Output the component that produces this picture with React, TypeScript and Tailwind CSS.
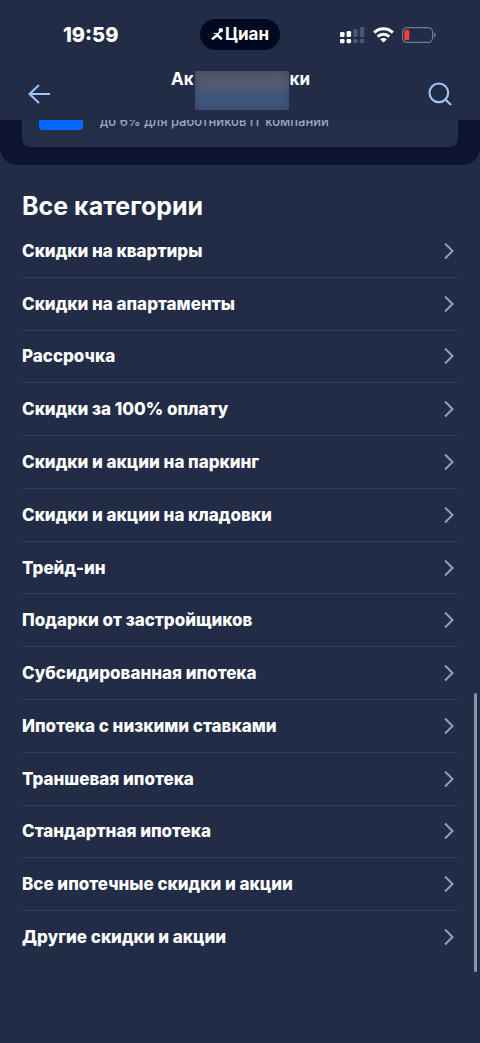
import { Search } from "lucide-react";

const categories = [
  "Скидки на квартиры",
  "Скидки на апартаменты",
  "Рассрочка",
  "Скидки за 100% оплату",
  "Скидки и акции на паркинг",
  "Скидки и акции на кладовки",
  "Трейд-ин",
  "Подарки от застройщиков",
  "Субсидированная ипотека",
  "Ипотека с низкими ставками",
  "Траншевая ипотека",
  "Стандартная ипотека",
  "Все ипотечные скидки и акции",
  "Другие скидки и акции",
];

function CianMark() {
  return (
    <svg viewBox="0 0 13 13" className="size-[13px]" fill="none" stroke="currentColor">
      <circle cx="9.8" cy="2.3" r="2.2" fill="currentColor" stroke="none" />
      <path d="M1 11.4 6.2 7l4.7 4.2" strokeWidth="2.5" />
      <path d="M6.2 6.8 8.8 3.8" strokeWidth="1.5" />
      <path d="M2.6 5.4h3.6" strokeWidth="0.9" />
    </svg>
  );
}

function SignalIcon() {
  return (
    <svg viewBox="0 0 25 17" className="h-[17px] w-[25px]" fill="#fff">
      <rect x="0" y="5" width="4.5" height="5" rx="1.3" />
      <rect x="6.6" y="4" width="4.5" height="6" rx="1.3" />
      <rect x="13.2" y="2" width="4.5" height="8" rx="1.3" fill="#4d566d" />
      <rect x="19.8" y="0" width="4.5" height="10" rx="1.3" fill="#4d566d" />
      <rect x="0" y="12" width="4.5" height="4.3" rx="1.3" />
      <rect x="6.6" y="12" width="4.5" height="4.3" rx="1.3" />
      <rect x="13.2" y="12" width="4.5" height="4.3" rx="1.3" fill="#4d566d" />
      <rect x="19.8" y="12" width="4.5" height="4.3" rx="1.3" fill="#4d566d" />
    </svg>
  );
}

function WifiIcon() {
  return (
    <svg viewBox="0 0 21 16" className="h-4 w-[21px]" fill="none" stroke="#fff" strokeWidth="3.1">
      <path d="M1.2 5.6a13.2 13.2 0 0 1 18.6 0" />
      <path d="M4.7 9.6a8.2 8.2 0 0 1 11.6 0" />
      <path d="M10.5 15.6 7.2 12.5a4.4 4.4 0 0 1 6.6 0z" fill="#fff" stroke="none" />
    </svg>
  );
}

function BatteryIcon() {
  return (
    <svg viewBox="0 0 34 16" className="h-4 w-[34px]">
      <rect x="0.6" y="0.6" width="30" height="14.8" rx="4.6" fill="none" stroke="#747c8f" strokeWidth="1.2" />
      <rect x="2.3" y="2.8" width="5" height="10.4" rx="2.2" fill="#fb3b40" />
      <path d="M32 5.5c2.2.7 2.2 4.3 0 5z" fill="#747c8f" />
    </svg>
  );
}

function StatusBar() {
  return (
    <div className="grid h-[70px] grid-cols-[1fr_auto_1fr] items-center">
      <span className="pl-[63px] text-[20px] leading-6 font-extrabold">19:59</span>
      <div className="mb-0.5 flex h-[31px] items-center gap-px rounded-full bg-[#010921] px-[11px] text-[17px] leading-5 font-bold">
        <CianMark />
        <span>Циан</span>
      </div>
      <div className="flex items-center justify-end gap-2 pr-11">
        <SignalIcon />
        <WifiIcon />
        <BatteryIcon />
      </div>
    </div>
  );
}

function Header() {
  return (
    <header className="z-10 h-[120px] bg-[#222c46]">
      <StatusBar />
      <div className="flex items-center justify-between pr-[26px] pl-7">
        <button type="button" aria-label="Назад" className="flex h-12 items-center text-[#9cc6ff]">
          <svg viewBox="0 0 23 20" className="h-5 w-[23px]" fill="none" stroke="currentColor" strokeWidth="2">
            <path d="M22 10H1.5M11 1 1.5 10l9.5 9" />
          </svg>
        </button>
        <h1 className="mb-2 ml-1 flex gap-px text-[17px] leading-4 font-bold">
          <span>Ак</span>
          <span className="h-[39px] w-[94px] bg-linear-to-b from-[#555a6a] via-[#525b71] via-35% to-[#3e557d] to-65% shadow-[inset_0_0_8px_#3a4663]" />
          <span>ки</span>
        </h1>
        <button type="button" aria-label="Поиск" className="flex h-12 items-center text-[#9cc6ff]">
          <Search className="size-7" strokeWidth={1.8} />
        </button>
      </div>
    </header>
  );
}

function PromoCard() {
  return (
    <section className="rounded-b-[18px] bg-[#0c1430] px-[22px] pb-[18px]">
      <div className="-mt-4 flex h-[43px] items-start gap-[17px] rounded-b-lg bg-[#242e48] pl-[17px]">
        <div className="h-[26px] w-11 rounded-b bg-[#0468ff]" />
        <p className="pt-[7px] text-[13px] leading-5 font-medium text-[#9da8c3]">до 6% для работников IT компании</p>
      </div>
    </section>
  );
}

function CategoryLink({ title }: { title: string }) {
  return (
    <li className="flex flex-1 border-b border-[#333e58] last:border-b-0">
      <a href="#" className="flex flex-1 items-center justify-between pr-1">
        <span className="text-[17px] leading-6 font-extrabold">{title}</span>
        <svg viewBox="0 0 10 18" className="h-[18px] w-2.5" fill="none" stroke="#929fbd" strokeWidth="2">
          <path d="m1 1.5 7.5 7.5L1 16.5" />
        </svg>
      </a>
    </li>
  );
}

export default function App() {
  return (
    <div className="relative flex min-h-screen flex-col bg-[#222c46] font-['Inter','Noto_Sans',sans-serif] text-white">
      <Header />
      <PromoCard />
      <main className="flex flex-1 flex-col px-[22px] pt-[25px] pb-20">
        <h2 className="text-[25px] leading-8 font-bold">Все категории</h2>
        <ul className="mt-[3px] flex flex-1 flex-col">
          {categories.map((title) => (
            <CategoryLink key={title} title={title} />
          ))}
        </ul>
      </main>
      <div className="absolute right-[3px] bottom-[71px] h-[279px] w-[3px] rounded-full bg-[#8993a3]" />
    </div>
  );
}
